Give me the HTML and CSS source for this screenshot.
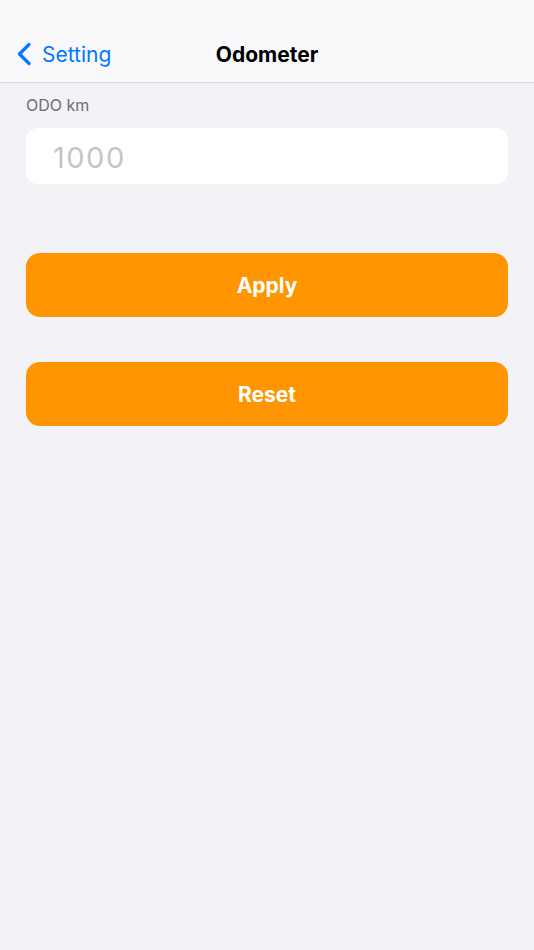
FILE: index.html
```html
<!DOCTYPE html>
<html lang="en">
<head>
<meta charset="utf-8">
<title>Odometer</title>
<link rel="stylesheet" href="styles.css">
</head>
<body>
<header class="nav">
  <div class="bar">
    <a class="back" href="#">
      <svg class="chevron" width="14" height="24" viewBox="0 0 14 24" aria-hidden="true">
        <polyline points="12,2.5 2.5,12 12,21.5" fill="none" stroke="#007aff" stroke-width="3.2" stroke-linecap="round" stroke-linejoin="round"/>
      </svg>
      <span class="back-text">Setting</span>
    </a>
    <h1 class="title">Odometer</h1>
    <div class="spacer"></div>
  </div>
</header>
<main class="content">
  <label class="field-label" for="odo">ODO km</label>
  <div class="field">
    <input id="odo" class="field-input" type="text" placeholder="1000">
  </div>
  <button class="btn btn-apply" type="button">Apply</button>
  <button class="btn btn-reset" type="button">Reset</button>
</main>
</body>
</html>
```
FILE: styles.css
```css
* { box-sizing: border-box; }
html, body {
  margin: 0;
  padding: 0;
  background: #f2f2f7;
  font-family: Inter, "Liberation Sans", Arial, sans-serif;
  height: 100%;
}
.nav {
  height: 83px;
  padding-top: 32px;
  background: #f9f9fb;
  border-bottom: 1px solid #d9d9dd;
}
.bar {
  height: 44px;
  display: grid;
  grid-template-columns: 1fr auto 1fr;
  align-items: center;
}
.back {
  display: flex;
  align-items: center;
  text-decoration: none;
  color: #007aff;
  padding-left: 17px;
}
.chevron { display: block; }
.back-text {
  margin-left: 11px;
  font-size: 21px;
}
.title {
  margin: 0;
  font-size: 21px;
  font-weight: 700;
  color: #000;
}
.content {
  padding: 0 26px;
  display: flex;
  flex-direction: column;
}
.field-label {
  margin-top: 12px;
  font-size: 16px;
  line-height: 20px;
  color: #6d6d72;
}
.field {
  margin-top: 13px;
  height: 56px;
  background: #fff;
  border-radius: 12px;
  display: flex;
  align-items: center;
}
.field-input {
  border: 0;
  outline: 0;
  background: transparent;
  width: 100%;
  padding: 3px 0 0 27px;
  font-family: inherit;
  font-size: 29px;
  letter-spacing: 1.5px;
  color: #000;
}
.field-input::placeholder { color: #c5c5c7; }
.btn {
  height: 64px;
  border: 0;
  border-radius: 14px;
  background: #ff9500;
  color: #fff;
  font-family: inherit;
  font-size: 21px;
  font-weight: 700;
  width: 100%;
  padding-top: 1px;
}
.btn-apply { margin-top: 69px; }
.btn-reset { margin-top: 45px; }
```
